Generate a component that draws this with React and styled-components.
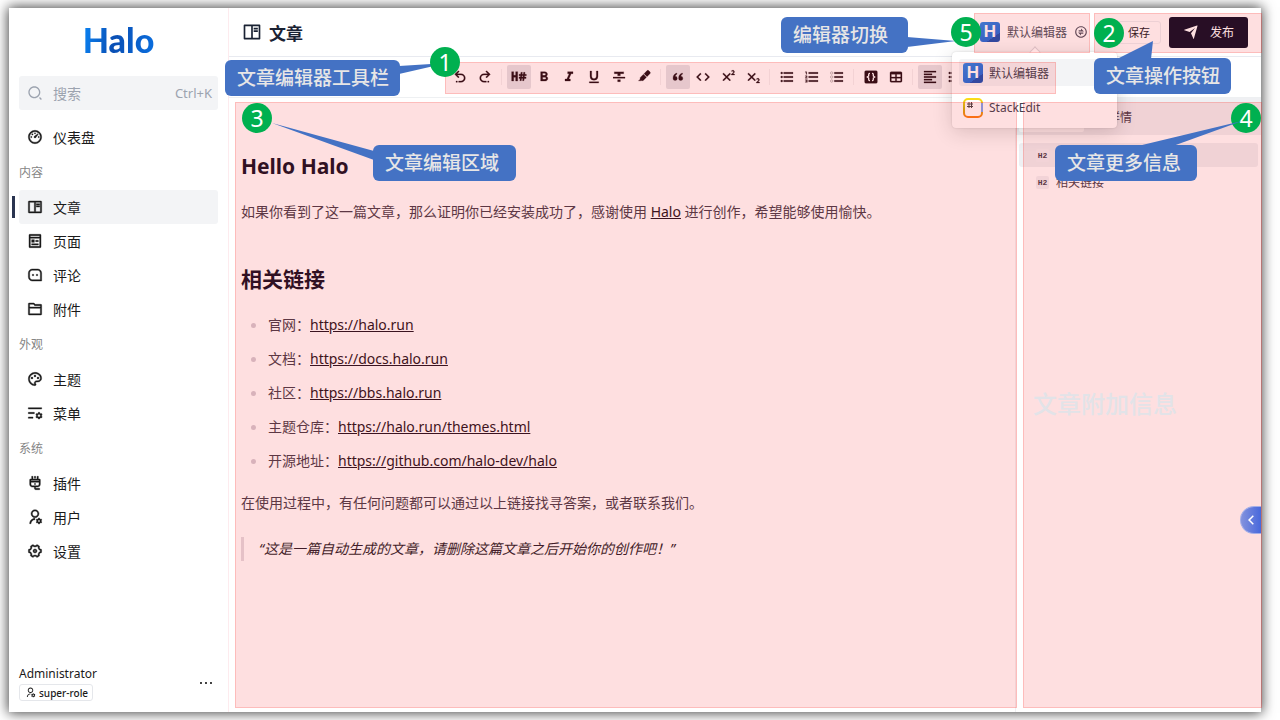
import React from "react";
import styled, { createGlobalStyle, css } from "styled-components";
import {
  RiDashboard3Line,
  RiBookReadLine,
  RiPagesLine,
  RiMessage3Line,
  RiFolder2Line,
  RiPaletteLine,
  RiListSettingsLine,
  RiPlug2Line,
  RiUserSettingsLine,
  RiSettings4Line,
  RiSearch2Line,
  RiMoreLine,
  RiExchangeLine,
  RiSendPlaneFill,
  RiArrowLeftSLine,
} from "react-icons/ri";

const GlobalStyle = createGlobalStyle`
  *, *::before, *::after { box-sizing: border-box; }
  body {
    margin: 0;
    background: #fff;
    color: #1a1a1a;
    font-family: "Noto Sans", "Noto Sans CJK SC", sans-serif;
    font-size: 14px;
  }
  button, input { font-family: inherit; }
  h1, h2, p, ul, blockquote { margin: 0; padding: 0; }
`;

/* ---------- frame ---------- */

const Page = styled.div`
  display: flex;
  min-height: 100vh;
  padding: 8px 19px 8px 9px;
  overflow: hidden;
`;

const Frame = styled.div`
  position: relative;
  flex: 1;
  display: flex;
  min-width: 0;
  background: #fff;
  box-shadow: 0 0 12px 1px rgba(0, 0, 0, 0.75);
`;

/* ---------- sidebar ---------- */

const Sidebar = styled.aside`
  display: flex;
  flex-direction: column;
  width: 220px;
  flex: none;
  padding: 12px 10px 11px;
  border-right: 1px solid #fdebee;
`;

const Logo = styled.div`
  align-self: center;
  height: 40px;
  line-height: 40px;
  font-family: Lato, sans-serif;
  font-size: 34px;
  font-weight: 900;
  background: linear-gradient(100deg, #0a84f5, #0a4fb4 45%, #0a6fe0);
  background-clip: text;
  color: transparent;
`;

const SearchBox = styled.label`
  display: flex;
  align-items: center;
  gap: 10px;
  height: 34px;
  margin-top: 16px;
  padding: 0 6px 0 8px;
  border-radius: 3px;
  background: #f3f4f6;
  color: #9ca3af;
  font-size: 13px;

  svg { flex: none; }
`;

const SearchInput = styled.input`
  flex: 1;
  min-width: 0;
  padding: 0;
  border: 0;
  outline: 0;
  background: transparent;
  font-size: 14px;

  &::placeholder { color: #9ca3af; opacity: 1; }
`;

const Nav = styled.nav`
  display: flex;
  flex-direction: column;
  margin-top: 10px;
`;

const NavLabel = styled.div`
  height: 36px;
  padding-top: 2px;
  line-height: 34px;
  color: #858585;
  font-size: 12px;
`;

const NavLink = styled.a`
  position: relative;
  display: flex;
  align-items: center;
  gap: 10px;
  height: 34px;
  padding-left: 8px;
  border-radius: 3px;
  color: #1a1a1a;
  text-decoration: none;

  svg {
    stroke: currentColor;
    stroke-width: 0.6px;
  }

  ${(p) =>
    p.$active &&
    css`
      background: #f3f4f6;

      &::before {
        content: "";
        position: absolute;
        left: -7px;
        top: 6px;
        width: 3px;
        height: 22px;
        background: #2a3450;
      }
    `}
`;

const Profile = styled.div`
  display: flex;
  align-items: center;
  justify-content: space-between;
  margin-top: auto;
  padding-right: 4px;
`;

const ProfileName = styled.div`
  line-height: 20px;
  font-size: 12px;
`;

const RoleTag = styled.span`
  display: flex;
  align-items: center;
  gap: 3px;
  width: fit-content;
  height: 17px;
  padding: 0 4px 0 5px;
  border: 1px solid #e5e7eb;
  border-radius: 3px;
  font-size: 10px;
  font-weight: 500;
`;

const PlainButton = styled.button`
  display: flex;
  padding: 0;
  border: 0;
  background: none;
  color: inherit;
`;

/* ---------- main column ---------- */

const Main = styled.main`
  display: flex;
  flex-direction: column;
  flex: 1;
  min-width: 0;
`;

const Header = styled.header`
  display: flex;
  align-items: center;
  height: 49px;
  padding: 0 13px;
  border-bottom: 1px solid #e8eaf0;
`;

const Title = styled.h1`
  display: flex;
  align-items: center;
  gap: 7px;
  margin-right: auto;
  color: #1a2233;
  font-size: 17px;
  font-weight: 700;
`;

const SwitchArea = styled.div`
  position: relative;
`;

const SwitchButton = styled.button`
  display: flex;
  align-items: center;
  gap: 7px;
  padding: 0;
  border: 0;
  background: none;
  color: #4a5160;
  font-size: 12px;
`;

const HMark = styled.span`
  width: 20px;
  height: 20px;
  border-radius: 3px;
  background: linear-gradient(145deg, #2486ea, #1c6cdc 72%, #1450b4 73%);
  color: #fff;
  font-family: "Liberation Sans", sans-serif;
  font-size: 17px;
  font-weight: 700;
  line-height: 20px;
  text-align: center;
`;

const Menu = styled.div`
  position: absolute;
  top: 30px;
  right: -29px;
  z-index: 2;
  width: 165px;
  padding: 7px;
  display: flex;
  flex-direction: column;
  gap: 8px;
  border-radius: 4px;
  background: #fff;
  box-shadow: 0 4px 20px rgba(0, 0, 0, 0.16), 0 0 2px rgba(0, 0, 0, 0.15);

  &::before {
    content: "";
    position: absolute;
    top: -4px;
    left: 79px;
    width: 8px;
    height: 8px;
    border: solid #d6d6da;
    border-width: 1px 0 0 1px;
    background: #fff;
    transform: rotate(45deg);
  }
`;

const MenuItem = styled.button`
  display: flex;
  align-items: center;
  gap: 6px;
  height: 27px;
  padding: 0 4px;
  border: 0;
  border-radius: 3px;
  background: ${(p) => (p.$active ? "#f3f4f6" : "transparent")};
  color: #3c4250;
  font-size: 12px;
`;

const SaveButton = styled.button`
  height: 23px;
  margin-left: 25px;
  padding: 0 10px 0 14px;
  border: 1px solid #eceef2;
  border-radius: 3px;
  background: #fff;
  color: #14181f;
  font-size: 11px;
`;

const PublishButton = styled.button`
  display: flex;
  align-items: center;
  justify-content: center;
  gap: 11px;
  width: 79px;
  height: 31px;
  margin-left: 8px;
  border: 0;
  border-radius: 3px;
  background: #060c26;
  color: #fff;
  font-size: 12px;
`;

const Toolbar = styled.div`
  display: flex;
  align-items: center;
  gap: 1px;
  height: 41px;
  padding-left: 219px;
  border-bottom: 1px solid #eef0f2;
`;

const ToolButton = styled.button`
  display: flex;
  align-items: center;
  justify-content: center;
  width: 24px;
  height: 24px;
  padding: 0;
  border: 0;
  border-radius: 2px;
  background: ${(p) => (p.$active ? "#e4e4e8" : "transparent")};
  color: #1c0c14;
`;

const ToolDivider = styled.span`
  width: 1px;
  height: 16px;
  margin: 0 4px 0 3px;
  background: #f3f0f2;
`;

const Body = styled.div`
  display: flex;
  flex: 1;
`;

const Editor = styled.article`
  flex: 1;
  min-width: 0;
  padding: 52px 12px 24px;
  border-right: 1px solid #f0f0f2;
  color: #443c4a;
  line-height: 24px;

  a { color: #1c1220; }
`;

const EditorHeading = styled.h2`
  color: #101024;
  font-size: 21px;
  font-weight: 700;
  line-height: 32px;

  * + & { margin-top: 39px; }
`;

const Paragraph = styled.p`
  margin-top: ${(p) => (p.$afterList ? 13 : 18)}px;
`;

const LinkList = styled.ul`
  margin-top: 13px;
  list-style: none;
`;

const LinkItem = styled.li`
  display: flex;
  align-items: center;
  gap: 12px;
  height: 34px;
  padding-left: 10px;

  &::before {
    content: "";
    width: 5px;
    height: 5px;
    border-radius: 50%;
    background: #d3cbd4;
  }
`;

const Quote = styled.blockquote`
  margin-top: 22px;
  padding-left: 15px;
  border-left: 3px solid #e2dde2;
  color: #241c2a;
  font-style: italic;
`;

const SidePanel = styled.aside`
  width: 245px;
  flex: none;
  color: #443c4a;
  font-size: 12px;
`;

const Tabs = styled.div`
  display: flex;
  height: 37px;
  padding: 3px;
  background: #eff0f3;
`;

const Tab = styled.button`
  width: ${(p) => (p.$active ? 65 : 72)}px;
  padding: 0;
  border: 0;
  border-radius: 2px;
  background: ${(p) => (p.$active ? "#fff" : "transparent")};
  color: inherit;
  font-size: 12px;
`;

const Outline = styled.nav`
  display: flex;
  flex-direction: column;
  gap: 3px;
  padding: 8px 3px;
`;

const OutlineLink = styled.a`
  display: flex;
  align-items: center;
  gap: 7px;
  height: 24px;
  padding-left: 17px;
  border-radius: 3px;
  background: ${(p) => (p.$active ? "#eff0f3" : "transparent")};
  color: inherit;
  text-decoration: none;
`;

const LevelTag = styled.span`
  width: 13px;
  height: 13px;
  border-radius: 2px;
  background: #f2f2f5;
  font-family: "Liberation Mono", monospace;
  font-size: 8px;
  font-weight: 700;
  line-height: 13px;
  text-align: center;
`;

/* ---------- annotations ---------- */

const place = css`
  position: absolute;
  top: ${(p) => p.$top}px;
  ${(p) => p.$left !== undefined && `left: ${p.$left}px;`}
  ${(p) => p.$right !== undefined && `right: ${p.$right}px;`}
  ${(p) => p.$bottom !== undefined && `bottom: ${p.$bottom}px;`}
  ${(p) => p.$width !== undefined && `width: ${p.$width}px;`}
`;

const Annotations = styled.div`
  position: absolute;
  inset: 0;
  z-index: 3;
  pointer-events: none;
`;

const Region = styled.div`
  ${place}
  height: ${(p) => (p.$height ? `${p.$height}px` : "auto")};
  border: 1px solid rgba(250, 50, 40, 0.2);
  background: rgba(250, 30, 35, 0.14);
`;

const Marker = styled.span`
  ${place}
  width: 30px;
  height: 30px;
  border-radius: 50%;
  background: #00b050;
  color: #fff;
  font-size: 23px;
  line-height: 30px;
  text-align: center;
`;

const CalloutBox = styled.div`
  ${place}
  height: 36px;
  padding-left: 12px;
  border-radius: 6px;
  background: #4472c4;
  color: #e7e6e6;
  font-size: 19px;
  font-weight: 500;
  line-height: 36px;
  white-space: nowrap;
`;

const Tail = styled.svg`
  position: absolute;
  left: 0;
  top: 0;
  width: 1px;
  height: 1px;
  overflow: visible;
  fill: #4472c4;
`;

const Watermark = styled.div`
  ${place}
  color: #e2e3e8;
  font-size: 24px;
  font-weight: 500;
  line-height: 32px;
`;

const PanelHandle = styled.button`
  ${place}
  display: flex;
  align-items: center;
  justify-content: center;
  width: 21px;
  height: 28px;
  padding: 0;
  border: 1px solid #a3aee8;
  border-right: 0;
  border-radius: 14px 0 0 14px;
  background: linear-gradient(90deg, #8492dd, #4768dc);
  color: #fff;
`;

function Callout({ tail, children, ...rest }) {
  return (
    <CalloutBox {...rest}>
      <Tail aria-hidden="true">
        <polygon points={tail} />
      </Tail>
      {children}
    </CalloutBox>
  );
}

/* ---------- drawings ---------- */

const CROSS =
  "M16,7.41L11.41,12L16,16.59L14.59,18L10,13.41L5.41,18L4,16.59L8.59,12L4,7.41L5.41,6L10,10.59L14.59,6L16,7.41";
const TWO =
  "M21.85,9H16.97V8L17.86,7.18C18.62,6.54 19.18,6 19.56,5.55C19.93,5.11 20.12,4.7 20.13,4.32C20.14,4.04 20.05,3.8 19.86,3.62C19.68,3.43 19.39,3.34 19,3.33C18.69,3.34 18.42,3.4 18.16,3.5L17.5,3.89L17.05,2.72C17.32,2.5 17.64,2.33 18.03,2.19C18.42,2.05 18.85,2 19.32,2C20.1,2 20.7,2.2 21.1,2.61C21.5,3 21.72,3.54 21.72,4.18C21.71,4.74 21.53,5.26 21.18,5.73C20.84,6.21 20.42,6.66 19.91,7.09L19.27,7.61V7.63H21.85V9Z";
const LINES = "M7,5H21V7H7V5M7,13V11H21V13H7M7,19V17H21V19H7";

const bulletList = (
  <>
    <path d={LINES} />
    <circle cx="4" cy="6" r="1.5" />
    <circle cx="4" cy="12" r="1.5" />
    <circle cx="4" cy="18" r="1.5" />
  </>
);

const drawings = {
  undo: (
    <path d="M13.5,7A6.5,6.5 0 0,1 20,13.5A6.5,6.5 0 0,1 13.5,20H10V18H13.5C16,18 18,16 18,13.5C18,11 16,9 13.5,9H7.83L10.91,12.09L9.5,13.5L4,8L9.5,2.5L10.92,3.91L7.83,7H13.5M6,18H8V20H6V18Z" />
  ),
  redo: (
    <path d="M10.5,7A6.5,6.5 0 0,0 4,13.5A6.5,6.5 0 0,0 10.5,20H14V18H10.5C8,18 6,16 6,13.5C6,11 8,9 10.5,9H16.17L13.09,12.09L14.5,13.5L20,8L14.5,2.5L13.08,3.91L16.17,7H10.5M18,18H16V20H18V18Z" />
  ),
  heading: (
    <path d="M1,4H4V9.5H7V4H10V18H7V12.5H4V18H1V4M12,8H14.5L14.9,5H17.1L16.7,8H18.5L18.9,5H21.1L20.7,8H23V10.2H20.4L20.2,12H22.6V14.2H19.9L19.5,17.5H17.3L17.7,14.2H15.9L15.5,17.5H13.3L13.7,14.2H12V12H14L14.2,10.2H12V8M16.4,10.2L16.2,12H18L18.2,10.2H16.4Z" />
  ),
  bold: (
    <path d="M13.5,15.5H10V12.5H13.5A1.5,1.5 0 0,1 15,14A1.5,1.5 0 0,1 13.5,15.5M10,6.5H13A1.5,1.5 0 0,1 14.5,8A1.5,1.5 0 0,1 13,9.5H10M15.6,10.79C16.57,10.11 17.25,9 17.25,8C17.25,5.74 15.5,4 13.25,4H7V18H14.04C16.14,18 17.75,16.3 17.75,14.21C17.75,12.69 16.89,11.39 15.6,10.79Z" />
  ),
  italic: <path d="M10,4V7H12.21L8.79,15H6V18H14V15H11.79L15.21,7H18V4H10Z" />,
  underline: (
    <path d="M5,21H19V19H5V21M12,17A6,6 0 0,0 18,11V3H15.5V11A3.5,3.5 0 0,1 12,14.5A3.5,3.5 0 0,1 8.5,11V3H6V11A6,6 0 0,0 12,17Z" />
  ),
  strike: <path d="M3,14H21V12H3M5,4V7H10V10H14V7H19V4M10,19H14V16H10V19Z" />,
  marker: (
    <g transform="translate(3 1) scale(0.8)">
      <path d="M18.5,1.15C17.97,1.15 17.46,1.34 17.07,1.73L11.26,7.55L16.91,13.2L22.73,7.39C23.5,6.61 23.5,5.35 22.73,4.56L19.89,1.73C19.5,1.34 19,1.15 18.5,1.15M10.3,8.5L4.34,14.46C3.56,15.24 3.56,16.5 4.36,17.31C3.14,18.54 1.9,19.77 0.67,21H6.33L7.19,20.14C7.97,20.9 9.22,20.89 10,20.12L15.95,14.16" />
    </g>
  ),
  quote: (
    <path d="M10,6C7,7 4.5,9.5 4.5,14A3.2,3.2 0 1,0 7.7,10.9C8,9.5 9,8.4 10.6,7.6L10,6M18.4,6C15.4,7 12.9,9.5 12.9,14A3.2,3.2 0 1,0 16.1,10.9C16.4,9.5 17.4,8.4 19,7.6L18.4,6Z" stroke="currentColor" />
  ),
  code: (
    <path d="M14.6,16.6L19.2,12L14.6,7.4L16,6L22,12L16,18L14.6,16.6M9.4,16.6L4.8,12L9.4,7.4L8,6L2,12L8,18L9.4,16.6Z" />
  ),
  sup: (
    <>
      <path d={CROSS} />
      <path d={TWO} />
    </>
  ),
  sub: (
    <>
      <path d={CROSS} />
      <path d={TWO} transform="translate(0 12)" />
    </>
  ),
  bullets: bulletList,
  numbers: (
    <path d="M7,13V11H21V13H7M7,19V17H21V19H7M7,7V5H21V7H7M3,8V5H2V4H4V8H3M2,17V16H5V20H2V19H4V18.5H3V17.5H4V17H2M4.25,10A0.75,0.75 0 0,1 5,10.75C5,10.95 4.92,11.14 4.79,11.27L3.12,13H5V14H2V13.08L4,11H2V10H4.25Z" />
  ),
  tasks: (
    <>
      <path d="M8,5H21V7H8V5M8,13V11H21V13H8M8,19V17H21V19H8" />
      <g fill="none" stroke="currentColor">
        <circle cx="4" cy="6" r="1.8" />
        <circle cx="4" cy="12" r="1.8" />
        <circle cx="4" cy="18" r="1.8" />
      </g>
    </>
  ),
  braces: (
    <>
      <rect x="2.5" y="2.5" width="19" height="19" rx="2" />
      <path
        d="M10.5 6.500H10Q8.500 6.500 8.500 8.500V10.500L6.500 12L8.500 13.500V15.500Q8.500 17.500 10 17.500H10.500M13.500 6.500H14Q15.500 6.500 15.500 8.500V10.500L17.500 12L15.500 13.500V15.500Q15.500 17.500 14 17.500H13.500"
        fill="none"
        stroke="#fff"
        strokeWidth="2"
      />
    </>
  ),
  table: (
    <path d="M5,4H19A2,2 0 0,1 21,6V18A2,2 0 0,1 19,20H5A2,2 0 0,1 3,18V6A2,2 0 0,1 5,4M5,8V12H11V8H5M13,8V12H19V8H13M5,14V18H11V14H5M13,14V18H19V14H13Z" />
  ),
  left: (
    <path d="M3,3H21V5H3V3M3,7H15V9H3V7M3,11H21V13H3V11M3,15H15V17H3V15M3,19H21V21H3V19Z" />
  ),
  more: bulletList,
};

const ToolIcon = ({ name }) => (
  <svg
    viewBox="0 0 24 24"
    width="16"
    height="16"
    fill="currentColor"
    stroke="currentColor"
    strokeWidth="0.4"
    aria-hidden="true"
  >
    {drawings[name]}
  </svg>
);

const StackEditMark = () => (
  <svg width="20" height="20" viewBox="0 0 20 20" aria-hidden="true">
    <defs>
      <linearGradient id="stack" x1="0" y1="0" x2="0" y2="1">
        <stop offset="0" stopColor="#fbdc18" />
        <stop offset="0.5" stopColor="#c9b60c" />
        <stop offset="1" stopColor="#fb7c14" />
      </linearGradient>
    </defs>
    <rect x="1" y="1" width="18" height="18" rx="4" fill="#fff" stroke="url(#stack)" strokeWidth="2" />
    <path d="M19 5V14" stroke="#7da4ee" strokeWidth="2" />
    <path d="M6 4V10M8.500 4V10M4 6H10M4 8.500H10" stroke="#444" strokeWidth="1" />
  </svg>
);

/* ---------- data ---------- */

const navGroups = [
  { items: [["仪表盘", RiDashboard3Line]] },
  {
    label: "内容",
    items: [
      ["文章", RiBookReadLine, true],
      ["页面", RiPagesLine],
      ["评论", RiMessage3Line],
      ["附件", RiFolder2Line],
    ],
  },
  {
    label: "外观",
    items: [
      ["主题", RiPaletteLine],
      ["菜单", RiListSettingsLine],
    ],
  },
  {
    label: "系统",
    items: [
      ["插件", RiPlug2Line],
      ["用户", RiUserSettingsLine],
      ["设置", RiSettings4Line],
    ],
  },
];

const toolGroups = [
  ["undo", "redo"],
  ["heading", "bold", "italic", "underline", "strike", "marker"],
  ["quote", "code", "sup", "sub"],
  ["bullets", "numbers", "tasks"],
  ["braces", "table"],
  ["left", "more"],
];
const activeTools = ["heading", "quote", "left"];

const links = [
  ["官网：", "https://halo.run"],
  ["文档：", "https://docs.halo.run"],
  ["社区：", "https://bbs.halo.run"],
  ["主题仓库：", "https://halo.run/themes.html"],
  ["开源地址：", "https://github.com/halo-dev/halo"],
];

export default function App() {
  return (
    <Page>
      <GlobalStyle />
      <Frame>
        <Sidebar>
          <Logo>Halo</Logo>
          <SearchBox>
            <RiSearch2Line size={16} />
            <SearchInput placeholder="搜索" aria-label="搜索" />
            <span>Ctrl+K</span>
          </SearchBox>
          <Nav>
            {navGroups.map((group, i) => (
              <React.Fragment key={i}>
                {group.label && <NavLabel>{group.label}</NavLabel>}
                {group.items.map(([text, Icon, active]) => (
                  <NavLink key={text} href="#" $active={active}>
                    <Icon size={16} />
                    {text}
                  </NavLink>
                ))}
              </React.Fragment>
            ))}
          </Nav>
          <Profile>
            <div>
              <ProfileName>Administrator</ProfileName>
              <RoleTag>
                <RiUserSettingsLine size={11} />
                super-role
              </RoleTag>
            </div>
            <PlainButton aria-label="更多">
              <RiMoreLine size={16} />
            </PlainButton>
          </Profile>
        </Sidebar>

        <Main>
          <Header>
            <Title>
              <RiBookReadLine size={20} />
              文章
            </Title>
            <SwitchArea>
              <SwitchButton>
                <HMark>H</HMark>
                默认编辑器
                <RiExchangeLine size={14} />
              </SwitchButton>
              <Menu>
                <MenuItem $active>
                  <HMark>H</HMark>
                  默认编辑器
                </MenuItem>
                <MenuItem>
                  <StackEditMark />
                  StackEdit
                </MenuItem>
              </Menu>
            </SwitchArea>
            <SaveButton>保存</SaveButton>
            <PublishButton>
              <RiSendPlaneFill size={16} />
              发布
            </PublishButton>
          </Header>

          <Toolbar>
            {toolGroups.map((group, i) => (
              <React.Fragment key={i}>
                {i > 0 && <ToolDivider />}
                {group.map((name) => (
                  <ToolButton key={name} aria-label={name} $active={activeTools.includes(name)}>
                    <ToolIcon name={name} />
                  </ToolButton>
                ))}
              </React.Fragment>
            ))}
          </Toolbar>

          <Body>
            <Editor>
              <EditorHeading>Hello Halo</EditorHeading>
              <Paragraph>
                如果你看到了这一篇文章，那么证明你已经安装成功了，感谢使用 <a href="#">Halo</a>{" "}
                进行创作，希望能够使用愉快。
              </Paragraph>
              <EditorHeading>相关链接</EditorHeading>
              <LinkList>
                {links.map(([label, url]) => (
                  <LinkItem key={url}>
                    <span>
                      {label}
                      <a href={url}>{url}</a>
                    </span>
                  </LinkItem>
                ))}
              </LinkList>
              <Paragraph $afterList>
                在使用过程中，有任何问题都可以通过以上链接找寻答案，或者联系我们。
              </Paragraph>
              <Quote>“这是一篇自动生成的文章，请删除这篇文章之后开始你的创作吧！”</Quote>
            </Editor>
            <SidePanel>
              <Tabs>
                <Tab $active aria-label="大纲" />
                <Tab>详情</Tab>
              </Tabs>
              <Outline>
                <OutlineLink href="#" $active aria-label="Hello Halo">
                  <LevelTag>H2</LevelTag>
                </OutlineLink>
                <OutlineLink href="#">
                  <LevelTag>H2</LevelTag>
                  相关链接
                </OutlineLink>
              </Outline>
            </SidePanel>
          </Body>
        </Main>

        <Annotations>
          <Region $top={54} $left={436} $right={205} $height={32} />
          <Region $top={94} $left={226} $right={244} $bottom={4} />
          <Region $top={94} $right={-1} $width={239} $bottom={4} />
          <Region $top={5} $right={171} $width={116} $height={40} />
          <Region $top={5} $right={-1} $width={168} $height={40} />

          <Watermark $top={380} $right={84}>文章附加信息</Watermark>
          <PanelHandle $top={498} $right={0} aria-label="展开">
            <RiArrowLeftSLine size={18} />
          </PanelHandle>

          <Callout $top={52} $left={216} $width={175} tail="174,6 174,14 222,3">
            文章编辑器工具栏
          </Callout>
          <Callout $top={137} $left={364} $width={143} tail="1,6 1,15 -101,-22">
            文章编辑区域
          </Callout>
          <Callout $top={9} $right={353} $width={127} tail="126,20 126,30 175,24">
            编辑器切换
          </Callout>
          <Callout $top={50} $right={30} $width={137} tail="23,1 57,1 59,-17">
            文章操作按钮
          </Callout>
          <Marker $top={39} $left={421}>1</Marker>
          <Marker $top={10} $right={137}>2</Marker>
          <Marker $top={95} $left={233}>3</Marker>
          <Marker $top={95} $right={0}>4</Marker>
          <Marker $top={9} $right={280}>5</Marker>
          <Callout $top={137} $right={64} $width={142} tail="83,1 118,1 187,-24">
            文章更多信息
          </Callout>
        </Annotations>
      </Frame>
    </Page>
  );
}
